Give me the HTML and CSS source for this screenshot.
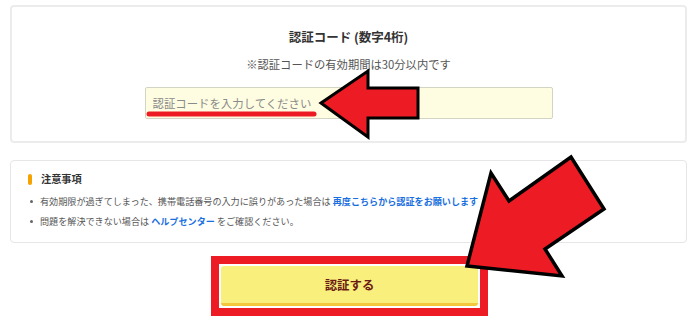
FILE: index.html
```html
<!DOCTYPE html>
<html lang="ja">
<head>
<meta charset="utf-8">
<link rel="stylesheet" href="styles.css">
</head>
<body>
<div class="page">
  <section class="card code-card">
    <h2 class="title">認証コード (数字4桁)</h2>
    <p class="sub">※認証コードの有効期間は30分以内です</p>
    <input class="code-input" type="text" placeholder="認証コードを入力してください">
  </section>
  <section class="card notes">
    <h3 class="notes-head"><span class="bar"></span>注意事項</h3>
    <ul class="notes-list">
      <li>有効期限が過ぎてしまった、携帯電話番号の入力に誤りがあった場合は <a href="#">再度こちらから認証をお願いします</a></li>
      <li>問題を解決できない場合は <a href="#">ヘルプセンター</a> をご確認ください。</li>
    </ul>
  </section>
  <div class="btn-wrap">
    <div class="frame"><button class="submit">認証する</button></div>
  </div>
  <svg class="overlay" width="700" height="323" viewBox="0 0 700 323">
    <line x1="149" y1="114" x2="314" y2="114" stroke="#ed1c24" stroke-width="5" stroke-linecap="round"/>
    <polygon points="321,103 368,71 368,88 418,88 418,118 368,118 368,137" fill="#ed1c24" stroke="#000" stroke-width="3" stroke-linejoin="miter"/>
    <polygon points="467,266 491,173 509,201 571,157 604,209 545,249 562,276" fill="#ed1c24" stroke="#000" stroke-width="3.5" stroke-linejoin="miter"/>
  </svg>
</div>
</body>
</html>
```
FILE: styles.css
```css
* { box-sizing: border-box; }
html, body { margin: 0; padding: 0; background: #fff; }
body { font-family: "Noto Sans CJK JP", "Noto Sans", sans-serif; color: #333; }
.page { position: relative; width: 700px; height: 323px; padding: 5px 13px 0 10px; overflow: hidden; }
.card { border: 2px solid #ececec; border-radius: 4px; background: #fff; }
.code-card { height: 138px; padding: 21px 0 0; display: flex; flex-direction: column; align-items: center; }
.title { margin: 0; font-size: 12.5px; line-height: 18px; font-weight: 700; color: #333; }
.sub { margin: 10px 0 0; font-size: 11.3px; line-height: 16px; color: #555; }
.code-input { margin-top: 15px; width: 408px; height: 32px; border: 1px solid #d4d4c4; border-radius: 2px; background: #fffde1; padding: 0 7px; font-family: inherit; font-size: 11.4px; color: #333; outline: none; }
.code-input::placeholder { color: #8a8a8a; }
.notes { margin-top: 17px; height: 83px; padding: 11px 16px 0 16px; border-width: 1.5px; border-color: #e6e6e6; }
.notes-head { margin: 0; display: flex; align-items: center; gap: 9px; font-size: 10.2px; line-height: 14px; font-weight: 700; color: #333; }
.bar { width: 4px; height: 11px; border-radius: 2px; background: #f5a300; margin-left: 1px; }
.notes-list { margin: 8px 0 0; padding: 0; list-style: none; display: flex; flex-direction: column; gap: 6px; }
.notes-list li { position: relative; padding-left: 13px; font-size: 9.1px; line-height: 14px; color: #555; white-space: nowrap; }
.notes-list li::before { content: ""; position: absolute; left: 3px; top: 6px; width: 3px; height: 3px; border-radius: 50%; background: #666; }
.notes-list a { color: #1a6fe0; font-weight: 700; text-decoration: none; }
.btn-wrap { display: flex; justify-content: center; margin-top: 13px; padding-right: 0; }
.frame { margin-left: 2px; width: 277px; height: 60px; border: 8px solid #ed1c24; padding: 2px; background: #fff; }
.submit { display: block; width: 100%; height: 100%; border: 0; border-bottom: 3px solid #f3c63c; border-radius: 3px; background: #f8ef7c; font-family: inherit; font-size: 12.4px; font-weight: 700; color: #6b1b14; padding: 0; }
.overlay { position: absolute; top: 0; left: 0; pointer-events: none; }
```
